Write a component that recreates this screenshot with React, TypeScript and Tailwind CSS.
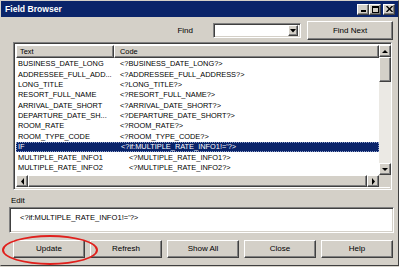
import React from 'react';

const raised = 'border border-t-white border-l-white border-r-[#404040] border-b-[#404040] shadow-[inset_-1px_-1px_0_#808080] bg-[#d4d0c8]';
const sunken = 'border border-t-[#808080] border-l-[#808080] border-r-white border-b-white shadow-[inset_1px_1px_0_#404040,inset_-1px_-1px_0_#d4d0c8]';

const rows = [
    { text: 'BUSINESS_DATE_LONG', code: '<?BUSINESS_DATE_LONG?>', pad: 'pl-[6px]' },
    { text: 'ADDRESSEE_FULL_ADD...', code: '<?ADDRESSEE_FULL_ADDRESS?>', pad: 'pl-[6px]' },
    { text: 'LONG_TITLE', code: '<?LONG_TITLE?>', pad: 'pl-[6px]' },
    { text: 'RESORT_FULL_NAME', code: '<?RESORT_FULL_NAME?>', pad: 'pl-[6px]' },
    { text: 'ARRIVAL_DATE_SHORT', code: '<?ARRIVAL_DATE_SHORT?>', pad: 'pl-[6px]' },
    { text: 'DEPARTURE_DATE_SH...', code: '<?DEPARTURE_DATE_SHORT?>', pad: 'pl-[6px]' },
    { text: 'ROOM_RATE', code: '<?ROOM_RATE?>', pad: 'pl-[6px]' },
    { text: 'ROOM_TYPE_CODE', code: '<?ROOM_TYPE_CODE?>', pad: 'pl-[6px]' },
    { text: 'IF', code: "<?if:MULTIPLE_RATE_INFO1!='?>", pad: 'pl-[7px]', selected: true },
    { text: 'MULTIPLE_RATE_INFO1', code: '<?MULTIPLE_RATE_INFO1?>', pad: 'pl-[15px]' },
    { text: 'MULTIPLE_RATE_INFO2', code: '<?MULTIPLE_RATE_INFO2?>', pad: 'pl-[15px]' },
    { text: 'MULTIPLE_RATE_INFO3', code: '<?MULTIPLE_RATE_INFO3?>', pad: 'pl-[15px]' },
];

function Arrow({ dir }: { dir: 'up' | 'down' | 'left' | 'right' }) {
    const pts = {
        up: '1,4 4,1 7,4',
        down: '1,1 4,4 7,1',
        left: '4,0 1,3.5 4,7',
        right: '1,0 4,3.5 1,7',
    }[dir];
    const vertical = dir === 'up' || dir === 'down';
    return (
        <svg width={vertical ? 8 : 5} height={vertical ? 5 : 7} viewBox={vertical ? '0 0 8 5' : '0 0 5 7'}>
            <polygon points={pts} fill="#000" />
        </svg>
    );
}

function ScrollButton({ dir }: { dir: 'up' | 'down' | 'left' | 'right' }) {
    return (
        <div className={`${raised} flex h-[12px] w-[12px] shrink-0 items-center justify-center`}>
            <Arrow dir={dir} />
        </div>
    );
}

function Button({ label, className = '' }: { label: string; className?: string }) {
    return (
        <button className={`${raised} flex items-center justify-center text-[8px] leading-none ${className}`}>{label}</button>
    );
}

export default function App() {
    return (
        <div className="relative h-[267px] w-[399px] overflow-hidden bg-[#d4d0c8] font-['Liberation_Sans',Arial,sans-serif] text-black">
            <div className="flex h-[266px] w-[399px] flex-col border border-t-[#d4d0c8] border-l-[#d4d0c8] border-r-[#404040] border-b-[#404040]">
                {/* title bar */}
                <div className="flex h-[16px] shrink-0 items-center justify-between bg-[#0a246a] pl-[4px] pr-[3px]">
                    <span className="text-[8.6px] font-bold leading-none text-white">Field Browser</span>
                    <div className="flex items-center">
                        <div className={`${raised} flex h-[11px] w-[12px] items-end justify-center pb-[2px]`}>
                            <span className="block h-[2px] w-[5px] bg-black" />
                        </div>
                        <div className={`${raised} flex h-[11px] w-[12px] items-center justify-center`}>
                            <span className="block h-[7px] w-[7px] border border-t-2 border-black" />
                        </div>
                        <div className={`${raised} ml-[2px] flex h-[11px] w-[12px] items-center justify-center`}>
                            <svg width="7" height="6" viewBox="0 0 7 6">
                                <path d="M0.5 0 L6.5 6 M6.5 0 L0.5 6" stroke="#000" strokeWidth="1.4" />
                            </svg>
                        </div>
                    </div>
                </div>

                {/* find row */}
                <div className="mt-[4px] flex h-[19px] shrink-0 items-center justify-end pr-[5px]">
                    <span className="mr-[20px] text-[8px] leading-none">Find</span>
                    <div className={`${sunken} flex h-[15px] w-[88px] items-center justify-end bg-white p-[2px]`}>
                        <div className={`${raised} flex h-[11px] w-[10px] items-center justify-center`}>
                            <svg width="6" height="4" viewBox="0 0 6 4">
                                <polygon points="0,0 6,0 3,3.5" fill="#000" />
                            </svg>
                        </div>
                    </div>
                    <Button label="Find Next" className="ml-[6px] h-[19px] w-[86px]" />
                </div>

                {/* list */}
                <div className={`${sunken} ml-[12px] mt-[2px] flex h-[148px] w-[379px] shrink-0 bg-white p-[2px] text-[7.4px]`}>
                    <div className="flex w-[363px] flex-col">
                        <div className="flex h-[13px] shrink-0">
                            <div className={`${raised} flex w-[98px] items-center pl-[3px]`}>Text</div>
                            <div className={`${raised} flex flex-1 items-center pl-[5px]`}>Code</div>
                        </div>
                        <div className="flex-1 overflow-hidden pt-[0.5px]">
                            {rows.map((r) => (
                                <div
                                    key={r.text}
                                    className={`flex h-[10.4px] items-center whitespace-nowrap ${r.selected ? 'bg-[#0a246a] text-white outline outline-dotted outline-[#8fa0c8] -outline-offset-1' : ''}`}
                                >
                                    <span className="w-[98px] shrink-0 overflow-hidden pl-[2px]">{r.text}</span>
                                    <span className={r.pad}>{r.code}</span>
                                </div>
                            ))}
                        </div>
                        <div className="flex h-[12px] shrink-0 bg-[#ebe9e4]">
                            <ScrollButton dir="left" />
                            <div className={`${raised} h-[12px] w-[339px]`} />
                            <div className="flex-1" />
                            <ScrollButton dir="right" />
                        </div>
                    </div>
                    <div className="flex w-[12px] flex-col bg-[#ebe9e4]">
                        <ScrollButton dir="up" />
                        <div className={`${raised} h-[25px] w-[12px] shrink-0`} />
                        <div className="flex-1" />
                        <ScrollButton dir="down" />
                        <div className="h-[12px] shrink-0 bg-[#d4d0c8]" />
                    </div>
                </div>

                {/* edit */}
                <div className="ml-[10px] mt-[6px] h-[10px] shrink-0 text-[8px] leading-[10px]">Edit</div>
                <div className={`${sunken} ml-[8px] mt-[1px] h-[26px] w-[385px] shrink-0 bg-white pl-[10px] pt-[5px] text-[7.6px] leading-[10px]`}>
                    {"<?if:MULTIPLE_RATE_INFO1!='?>"}
                </div>

                {/* buttons */}
                <div className="ml-[12px] mt-[7px] flex w-[380px] shrink-0 gap-[5px]">
                    <Button label="Update" className="h-[18px] w-[72px]" />
                    <Button label="Refresh" className="h-[18px] w-[72px]" />
                    <Button label="Show All" className="h-[18px] w-[72px]" />
                    <Button label="Close" className="h-[18px] w-[72px]" />
                    <Button label="Help" className="h-[18px] w-[72px]" />
                </div>
            </div>

            {/* red annotation ellipse */}
            <div className="pointer-events-none absolute left-[2px] top-[235px] h-[30px] w-[96px] rounded-[50%] border-2 border-[#e0201c]" />
        </div>
    );
}
